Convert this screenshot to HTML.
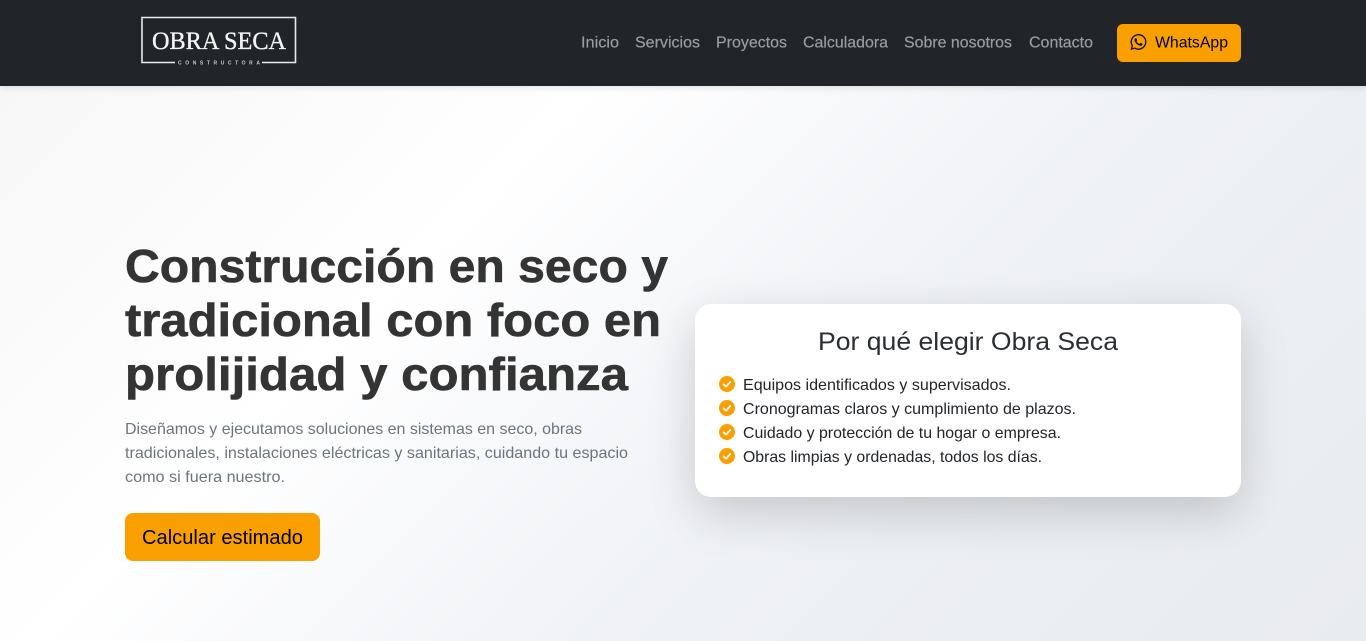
<!DOCTYPE html>
<html lang="es">
<head>
<meta charset="utf-8">
<title>Obra Seca</title>
<style>
html,body{margin:0;padding:0;width:1366px;height:641px;overflow:hidden;background:#fff}
body{position:relative;font-family:"Liberation Sans",sans-serif}
.hero{position:absolute;left:0;top:86px;width:1366px;height:555px;background:linear-gradient(135deg,#f7f7f7 0%,#ffffff 31%,#f3f5f8 52%,#eceff3 71%,#e9ecef 100%)}
header{position:absolute;left:0;top:0;width:1366px;height:86px;background:#212529;box-shadow:0 2px 6px rgba(0,0,0,.1)}
.wa{position:absolute;left:1117px;top:24px;width:124px;height:38px;background:#f9a000;border-radius:6px}
.cta{position:absolute;left:125px;top:513px;width:195px;height:48px;background:#f9a000;border-radius:8px}
.card{position:absolute;left:695px;top:304px;width:546px;height:193px;background:#fff;border-radius:16px;box-shadow:0 16px 48px rgba(0,0,0,.175)}
svg.t{position:absolute;left:0;top:0;width:1366px;height:641px}
text{white-space:pre}
.nav{font:16px "Liberation Sans",sans-serif;fill:#9a9c9e;stroke:#9a9c9e;stroke-width:.2}
.h1{font:bold 46px "Liberation Sans",sans-serif;fill:#343434;stroke:#343434;stroke-width:.6}
.p{font:16px "Liberation Sans",sans-serif;fill:#6c757d}
.li{font:16px "Liberation Sans",sans-serif;fill:#212529}
</style>
</head>
<body>
<div class="hero"></div>
<header></header>
<div class="wa"></div>
<div class="cta"></div>
<div class="card"></div>
<svg class="t" viewBox="0 0 1366 641" xmlns="http://www.w3.org/2000/svg">
  <!-- logo -->
  <path d="M175 62.500H142V17.500H295.500V62.500H262" fill="none" stroke="#eaeaea" stroke-width="1.600"/>
  <text x="152" y="49" font-family="Liberation Serif,serif" font-size="25" fill="#f4f4f4" stroke="#f4f4f4" stroke-width=".35" textLength="134" lengthAdjust="spacingAndGlyphs">OBRA SECA</text>
  <text x="178" y="64.300" font-family="Liberation Sans,sans-serif" font-weight="bold" font-size="5" fill="#c8c9ca" textLength="82" lengthAdjust="spacing">CONSTRUCTORA</text>

  <!-- nav -->
  <text class="nav" x="581" y="47.600" textLength="38" lengthAdjust="spacingAndGlyphs">Inicio</text>
  <text class="nav" x="635" y="47.600" textLength="65" lengthAdjust="spacingAndGlyphs">Servicios</text>
  <text class="nav" x="716" y="47.600" textLength="71" lengthAdjust="spacingAndGlyphs">Proyectos</text>
  <text class="nav" x="803" y="47.600" textLength="85" lengthAdjust="spacingAndGlyphs">Calculadora</text>
  <text class="nav" x="904" y="47.600" textLength="108" lengthAdjust="spacingAndGlyphs">Sobre nosotros</text>
  <text class="nav" x="1029" y="47.600" textLength="64" lengthAdjust="spacingAndGlyphs">Contacto</text>

  <!-- whatsapp -->
  <path transform="translate(1130.500,34)" fill="#111" d="M13.601 2.326A7.85 7.85 0 0 0 7.994 0C3.627 0 .068 3.558.064 7.926c0 1.399.366 2.76 1.057 3.965L0 16l4.204-1.102a7.9 7.9 0 0 0 3.79.965h.004c4.368 0 7.926-3.558 7.93-7.93A7.9 7.9 0 0 0 13.6 2.326zM7.994 14.521a6.6 6.6 0 0 1-3.356-.92l-.24-.144-2.494.654.666-2.433-.156-.251a6.56 6.56 0 0 1-1.007-3.505c0-3.626 2.957-6.584 6.591-6.584a6.56 6.56 0 0 1 4.66 1.931 6.56 6.56 0 0 1 1.928 4.66c-.004 3.639-2.961 6.592-6.592 6.592m3.615-4.934c-.197-.099-1.17-.578-1.353-.646-.182-.065-.315-.099-.445.099-.133.197-.513.646-.627.775-.114.133-.232.148-.43.05-.197-.1-.836-.308-1.592-.985-.59-.525-.985-1.175-1.103-1.372-.114-.198-.011-.304.088-.403.087-.088.197-.232.296-.346.1-.114.133-.198.198-.33.065-.134.034-.248-.015-.347-.05-.099-.445-1.076-.612-1.47-.16-.389-.323-.335-.445-.34-.114-.007-.247-.007-.38-.007a.73.73 0 0 0-.529.247c-.182.198-.691.677-.691 1.654s.71 1.916.81 2.049c.098.133 1.394 2.132 3.383 2.992.47.205.84.326 1.129.418.475.152.904.129 1.246.08.38-.058 1.171-.48 1.338-.943.164-.464.164-.86.114-.943-.05-.084-.182-.133-.38-.232z"/>
  <text x="1155" y="47.600" font-family="Liberation Sans,sans-serif" font-size="16" fill="#000" textLength="73" lengthAdjust="spacingAndGlyphs">WhatsApp</text>

  <!-- hero -->
  <text class="h1" x="125" y="282" textLength="543" lengthAdjust="spacingAndGlyphs">Construcción en seco y</text>
  <text class="h1" x="125" y="336" textLength="536" lengthAdjust="spacingAndGlyphs">tradicional con foco en</text>
  <text class="h1" x="125" y="390" textLength="503" lengthAdjust="spacingAndGlyphs">prolijidad y confianza</text>

  <text class="p" x="125" y="434" textLength="457" lengthAdjust="spacingAndGlyphs">Diseñamos y ejecutamos soluciones en sistemas en seco, obras</text>
  <text class="p" x="125" y="458" textLength="503" lengthAdjust="spacingAndGlyphs">tradicionales, instalaciones eléctricas y sanitarias, cuidando tu espacio</text>
  <text class="p" x="125" y="482" textLength="160" lengthAdjust="spacingAndGlyphs">como si fuera nuestro.</text>

  <text x="142" y="544" font-family="Liberation Sans,sans-serif" font-size="20" fill="#000" textLength="161" lengthAdjust="spacingAndGlyphs">Calcular estimado</text>

  <!-- card -->
  <text x="818" y="350" font-family="Liberation Sans,sans-serif" font-size="25" fill="#2b2f33" textLength="300" lengthAdjust="spacingAndGlyphs">Por qué elegir Obra Seca</text>

  <g fill="#f9a000">
    <circle cx="727" cy="384" r="8"/><circle cx="727" cy="408" r="8"/><circle cx="727" cy="432" r="8"/><circle cx="727" cy="456" r="8"/>
  </g>
  <g fill="none" stroke="#fff" stroke-width="1.800" stroke-linecap="round" stroke-linejoin="round">
    <path d="M723.700 384.500l2.300 2.200 4.300-4.800"/>
    <path d="M723.700 408.500l2.300 2.200 4.300-4.800"/>
    <path d="M723.700 432.500l2.300 2.200 4.300-4.800"/>
    <path d="M723.700 456.500l2.300 2.200 4.300-4.800"/>
  </g>
  <text class="li" x="743" y="390" textLength="268" lengthAdjust="spacingAndGlyphs">Equipos identificados y supervisados.</text>
  <text class="li" x="743" y="414" textLength="333" lengthAdjust="spacingAndGlyphs">Cronogramas claros y cumplimiento de plazos.</text>
  <text class="li" x="743" y="438" textLength="318" lengthAdjust="spacingAndGlyphs">Cuidado y protección de tu hogar o empresa.</text>
  <text class="li" x="743" y="462" textLength="299" lengthAdjust="spacingAndGlyphs">Obras limpias y ordenadas, todos los días.</text>
</svg>
</body>
</html>
